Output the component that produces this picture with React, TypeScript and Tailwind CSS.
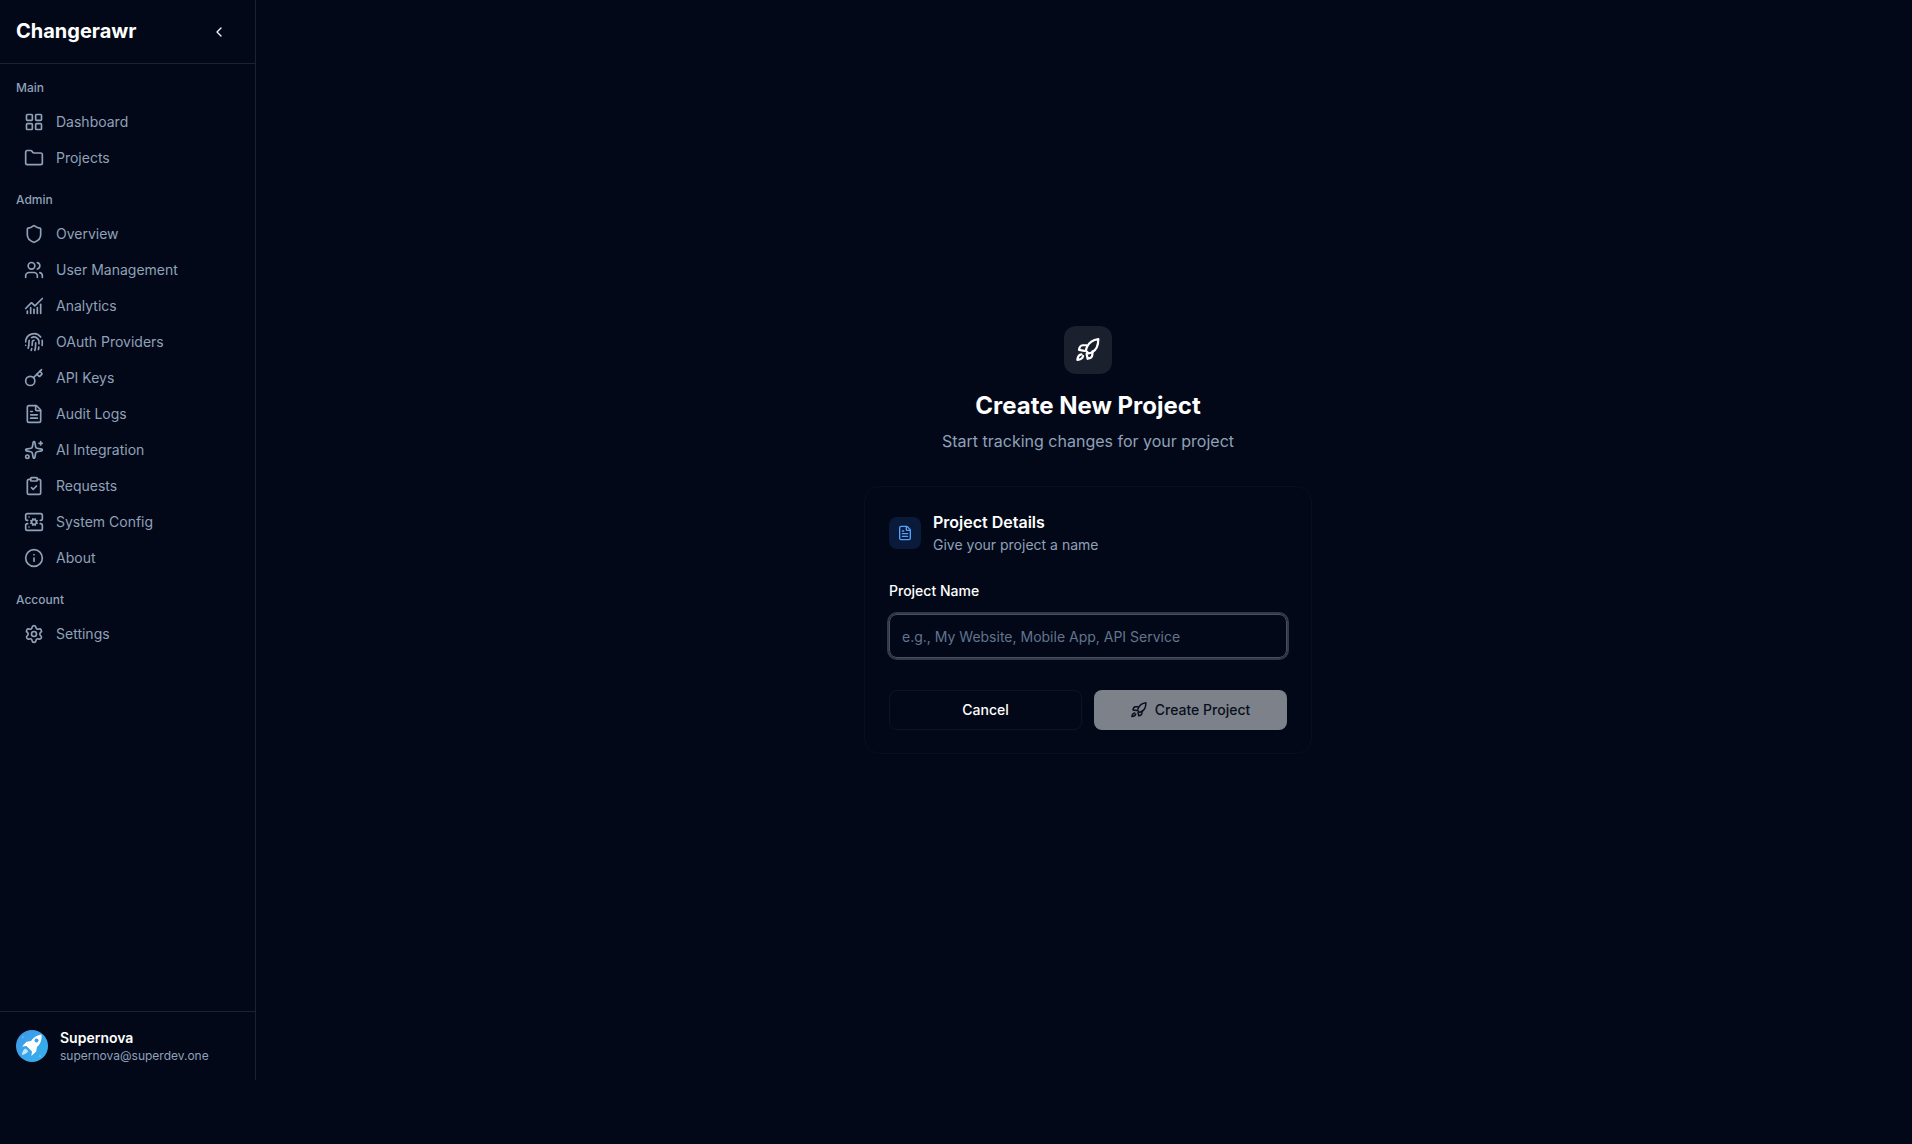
import {
  ChartNoAxesCombined,
  ChevronLeft,
  ClipboardCheck,
  FileText,
  Fingerprint,
  Folder,
  Info,
  Key,
  LayoutGrid,
  ServerCog,
  Settings,
  Shield,
  Sparkles,
  Users,
  type LucideIcon,
} from "lucide-react";

type NavItem = { label: string; icon: LucideIcon };
type NavSection = { title: string; items: NavItem[] };

const sections: NavSection[] = [
  {
    title: "Main",
    items: [
      { label: "Dashboard", icon: LayoutGrid },
      { label: "Projects", icon: Folder },
    ],
  },
  {
    title: "Admin",
    items: [
      { label: "Overview", icon: Shield },
      { label: "User Management", icon: Users },
      { label: "Analytics", icon: ChartNoAxesCombined },
      { label: "OAuth Providers", icon: Fingerprint },
      { label: "API Keys", icon: Key },
      { label: "Audit Logs", icon: FileText },
      { label: "AI Integration", icon: Sparkles },
      { label: "Requests", icon: ClipboardCheck },
      { label: "System Config", icon: ServerCog },
      { label: "About", icon: Info },
    ],
  },
  {
    title: "Account",
    items: [{ label: "Settings", icon: Settings }],
  },
];

function RocketIcon({ className }: { className?: string }) {
  return (
    <svg
      viewBox="1.5 1.5 21.500 21.500"
      fill="none"
      stroke="currentColor"
      strokeWidth={2}
      strokeLinecap="round"
      strokeLinejoin="round"
      className={className}
    >
      <path d="M21.500 2.500c-4.500.6-8.300 3-10.200 7-.5 1.100-.8 2.300-.9 3.500l2.300 2.300c1.200-.1 2.300-.5 3.300-1 3.900-2.100 5.500-6.800 5.500-11.800z" />
      <path d="M11 8H7.500c-1.700.2-3 1.800-3.300 4.200L9 13" />
      <path d="M16.300 13.500l-.2 3.300c-.2 1.700-2 3-4.200 3.300l-.9-4.500" />
      <path d="M6.400 16.200c-1.800.2-3.300 2-3.700 4.900 2.800-.2 4.700-1.500 5.200-3.500" />
    </svg>
  );
}

function Avatar() {
  return (
    <svg viewBox="0 0 32 32" className="h-8 w-8 shrink-0">
      <defs>
        <linearGradient id="avatarFill" x1="0" y1="0" x2="1" y2="1">
          <stop offset="0" stopColor="#3f97e8" />
          <stop offset="1" stopColor="#35b2ee" />
        </linearGradient>
      </defs>
      <circle cx="16" cy="16" r="16" fill="url(#avatarFill)" />
      <path
        d="M25.500 4.500c-4.200.6-8 2.800-10.500 6.500l-4.500.8L6 16.500l4.500-.6 5.500 5.500-.6 4.600 4.800-4.500.7-4.500c3.500-2.600 5.200-7.500 4.600-12.500z"
        fill="#ffffff"
      />
      <circle cx="20.500" cy="10.500" r="2" fill="#3aa3ea" />
      <path d="M9.500 18.500c-2 .8-3.200 3-3.700 6.500 3.200-.6 5.600-1.900 6.400-4z" fill="#ffffff" opacity="0.7" />
      <circle cx="7" cy="7" r="0.5" fill="#ffffff" />
      <circle cx="24" cy="26" r="0.5" fill="#ffffff" />
    </svg>
  );
}

export default function App() {
  return (
    <div className="min-h-[1144px] bg-[#020817] font-['Inter',sans-serif] text-white">
      <div className="flex h-[1080px]">
        <aside className="flex w-64 shrink-0 flex-col border-r border-[#1a2233]">
          <div className="flex h-16 items-center justify-between border-b border-[#1a2233] pl-4 pr-[28px]">
            <span className="mb-[2px] text-xl font-bold">Changerawr</span>
            <ChevronLeft className="h-4 w-4 text-slate-100" />
          </div>
          <nav className="flex flex-1 flex-col gap-4 px-4 pt-4">
            {sections.map((section) => (
              <div key={section.title}>
                <p className="mb-2 text-xs font-medium text-slate-400">{section.title}</p>
                {section.items.map((item) => (
                  <a key={item.label} className="flex h-9 items-center gap-3 px-2 text-sm text-slate-400">
                    <item.icon className="h-5 w-5 shrink-0" strokeWidth={2} />
                    {item.label}
                  </a>
                ))}
              </div>
            ))}
          </nav>
          <div className="flex items-center gap-3 border-t border-[#1a2233] p-4">
            <Avatar />
            <div>
              <p className="text-sm leading-5 font-semibold">Supernova</p>
              <p className="text-xs leading-4 text-slate-400">supernova@superdev.one</p>
            </div>
          </div>
        </aside>
        <main className="flex flex-1 flex-col items-center justify-center pl-2">
          <div className="flex h-12 w-12 items-center justify-center rounded-xl bg-[#1a202e]">
            <RocketIcon className="h-6 w-6 text-white" />
          </div>
          <h1 className="mt-4 text-2xl font-bold">Create New Project</h1>
          <p className="mt-[7px] text-base text-slate-400">Start tracking changes for your project</p>
          <section className="mt-[33px] w-[448px] rounded-2xl border border-[#0a0f1c] bg-[#020817] px-6 pt-[23px] pb-[23px]">
            <div className="flex items-center gap-3">
              <div className="flex h-8 w-8 items-center justify-center rounded-lg bg-[#0a1a3a]">
                <FileText className="h-4 w-4 text-blue-400" />
              </div>
              <div>
                <h2 className="text-base font-semibold">Project Details</h2>
                <p className="mt-px text-sm text-slate-400">Give your project a name</p>
              </div>
            </div>
            <label className="mt-[26px] block text-sm font-medium">Project Name</label>
            <input
              placeholder="e.g., My Website, Mobile App, API Service"
              className="mt-[13px] block h-11 w-full rounded-lg border border-[#4a4f5e] bg-transparent px-3 text-sm shadow-[0_0_0_2px_#343948] outline-none placeholder:text-slate-500"
            />
            <div className="mt-8 grid grid-cols-2 gap-3">
              <button className="h-10 rounded-lg border border-[#0e1422] text-sm font-medium text-white">
                Cancel
              </button>
              <button className="flex h-10 items-center justify-center gap-2 rounded-lg bg-slate-50 text-sm font-medium text-slate-900 opacity-50">
                <RocketIcon className="h-4 w-4" />
                Create Project
              </button>
            </div>
          </section>
        </main>
      </div>
    </div>
  );
}
